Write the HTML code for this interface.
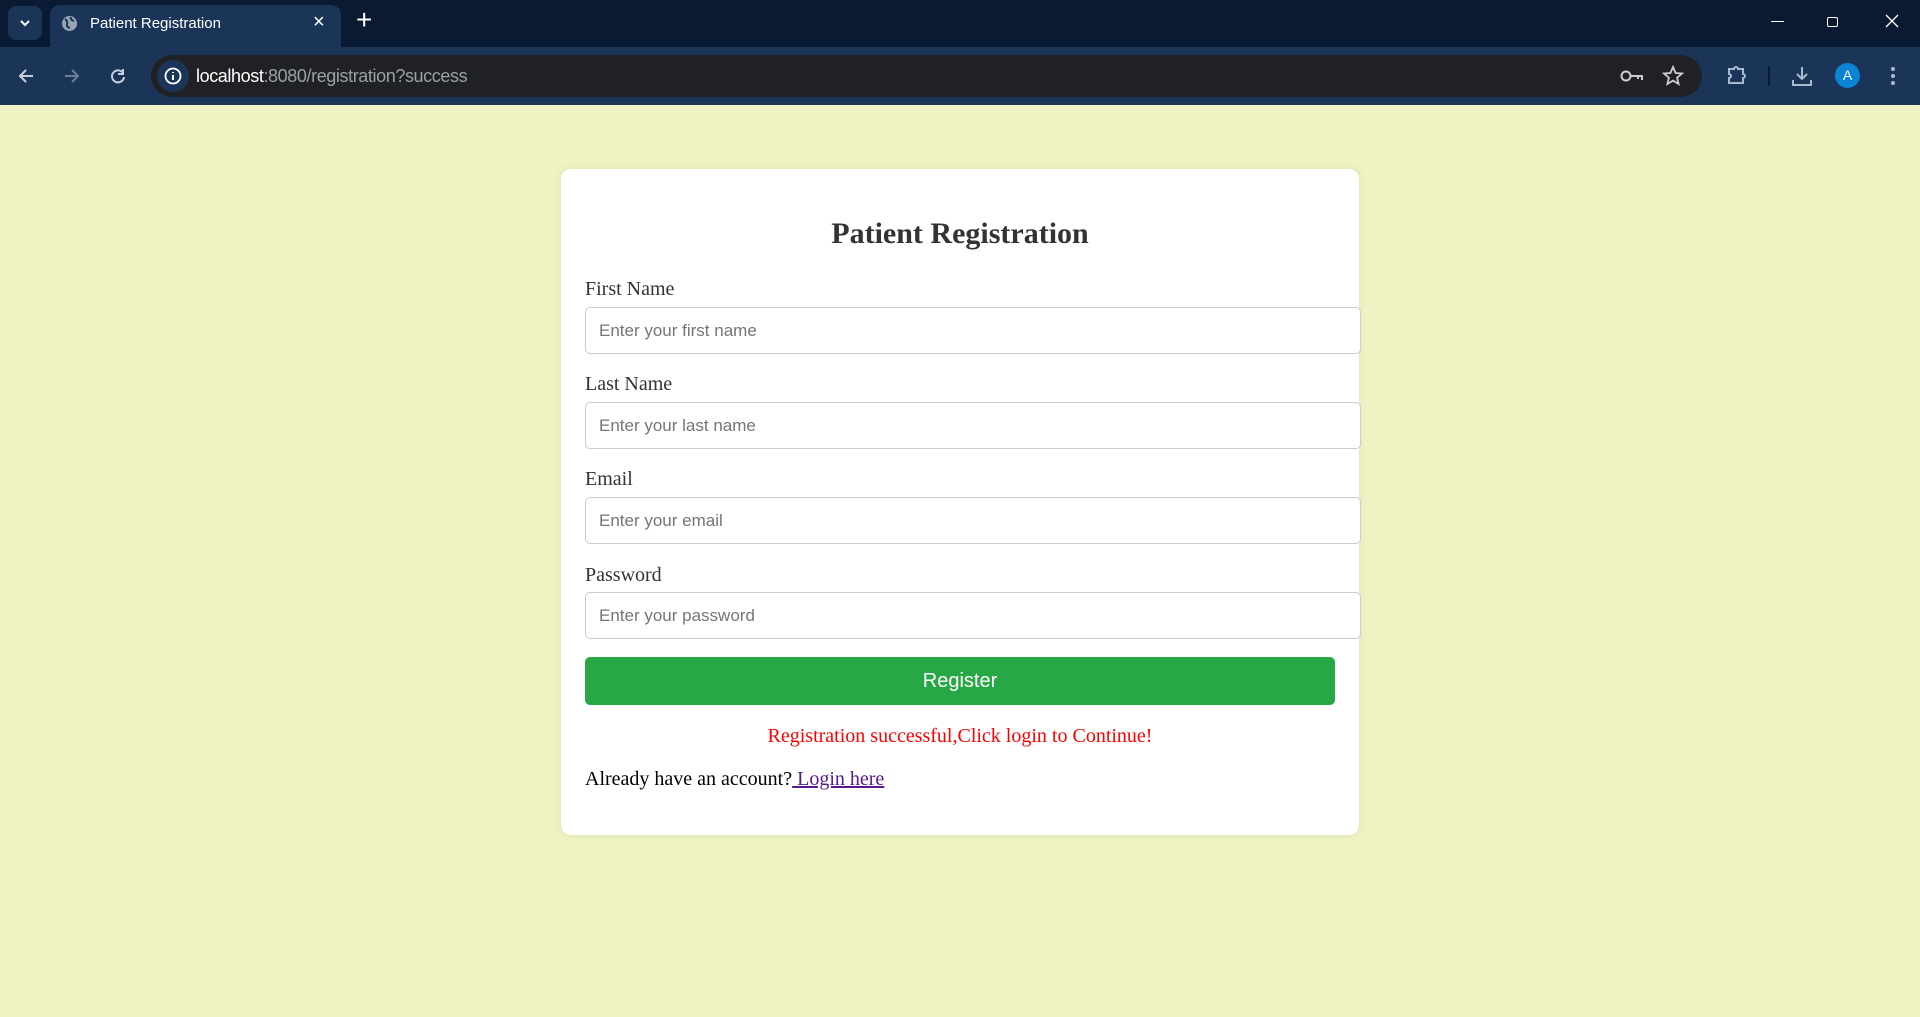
<!DOCTYPE html>
<html><head><meta charset="utf-8"><style>
*{box-sizing:border-box;margin:0;padding:0}
body{width:1920px;height:1017px;background:#eff2c3;position:relative;overflow:hidden;font-family:"Liberation Serif",serif}
.top{position:absolute;left:0;top:0;width:1920px;height:47px;background:#0b1a33}
.tb{position:absolute;left:0;top:47px;width:1920px;height:58px;background:#1b3558}
.tab{position:absolute;left:50px;top:5px;width:291px;height:42px;background:#1b3558;border-radius:10px 10px 0 0;color:#fff;font:15px "Liberation Sans",sans-serif}
.addr{position:absolute;left:151px;top:55px;width:1551px;height:42px;background:#202124;border-radius:21px}
.w{color:#fff}
.abs{position:absolute}
.card{position:absolute;left:561px;top:169px;width:798px;height:666px;background:#fff;border-radius:10px;box-shadow:0 0 8px rgba(0,0,0,.08)}
h2{position:absolute;left:0;width:100%;text-align:center;top:216px;font-size:30px;font-weight:bold;color:#333;line-height:36px}
.lbl{position:absolute;left:585px;font-size:20px;color:#333;line-height:24px}
.in{position:absolute;left:585px;width:776px;height:47px;border:1px solid #ccc;border-radius:5px;background:#fff;font:17px "Liberation Sans",sans-serif;color:#757575;padding:0 13px;line-height:45px}
</style></head><body>
<div class="top"></div>
<div class="abs" style="left:8px;top:6px;width:34px;height:34px;background:#1b3558;border-radius:8px"></div>
<svg class="abs" style="left:18px;top:16px" width="14" height="14"><path d="M3 5l4 4 4-4" stroke="#fff" stroke-width="2" fill="none"/></svg>
<div class="tab">
<svg class="abs" style="left:11px;top:10px" width="17" height="17"><circle cx="8.5" cy="8.5" r="7.5" fill="#9aa4b4"/><path d="M4 4q3 2 2 5t3 4M10 2q-1 3 3 4" stroke="#1b3558" stroke-width="2" fill="none"/></svg>
<span class="abs" style="left:40px;top:10px">Patient Registration</span>
<span class="abs" style="left:263px;top:6px;font-size:20px">×</span>
</div>
<span class="abs" style="left:356px;top:4px;color:#fff;font:28px 'Liberation Sans',sans-serif">+</span>
<div class="abs" style="left:1771px;top:21px;width:13px;height:1px;background:#fff"></div>
<div class="abs" style="left:1827px;top:17px;width:11px;height:10px;border:1px solid #fff;border-radius:2px"></div>
<svg class="abs" style="left:1885px;top:14px" width="14" height="14"><path d="M1 1l12 12M13 1L1 13" stroke="#fff" stroke-width="1.3"/></svg>
<div class="tb"></div>
<svg class="abs" style="left:16px;top:66px" width="20" height="20"><path d="M17 10H4M10 4l-6 6 6 6" stroke="#c7cfdc" stroke-width="2" fill="none"/></svg>
<svg class="abs" style="left:62px;top:66px" width="20" height="20"><path d="M3 10h13M10 4l6 6-6 6" stroke="#6d7d95" stroke-width="2" fill="none"/></svg>
<svg class="abs" style="left:108px;top:66px" width="20" height="20"><path d="M15 7A6 6 0 1 0 16 11M15 3v5h-5" stroke="#c7cfdc" stroke-width="2" fill="none"/></svg>
<div class="addr"></div>
<div class="abs" style="left:157px;top:60px;width:32px;height:32px;border-radius:50%;background:#1b3558"></div>
<svg class="abs" style="left:164px;top:67px" width="18" height="18"><circle cx="9" cy="9" r="7.5" stroke="#fff" stroke-width="1.8" fill="none"/><path d="M9 8v5M9 5v1" stroke="#fff" stroke-width="2"/></svg>
<span class="abs" style="left:196px;top:66px;font:18px 'Liberation Sans',sans-serif;color:#9aa0a6;letter-spacing:-0.4px"><span class="w">localhost</span>:8080/registration?success</span>
<svg class="abs" style="left:1620px;top:66px" width="24" height="20"><circle cx="6" cy="10" r="4.5" stroke="#ccc" stroke-width="2" fill="none"/><path d="M10.5 10H22v4M18 10v3" stroke="#ccc" stroke-width="2" fill="none"/></svg>
<svg class="abs" style="left:1662px;top:65px" width="22" height="22"><path d="M11 2l2.6 6 6.4.5-4.9 4.2 1.5 6.3L11 15.6 5.4 19l1.5-6.3L2 8.5 8.4 8z" stroke="#ccc" stroke-width="1.8" fill="none"/></svg>
<svg class="abs" style="left:1725px;top:64px" width="22" height="22"><path d="M4 5h5a2 2 0 0 1 4 0h5v5a2 2 0 0 1 0 4v5H4v-5a2 2 0 0 0 0-4z" stroke="#aab8d0" stroke-width="2" fill="none"/></svg>
<div class="abs" style="left:1768px;top:66px;width:2px;height:20px;background:#0b1a33"></div>
<svg class="abs" style="left:1790px;top:64px" width="24" height="24"><path d="M12 3v12M7 10l5 5 5-5M3 16v5h18v-5" stroke="#aab8d0" stroke-width="2" fill="none"/></svg>
<div class="abs" style="left:1835px;top:63px;width:25px;height:25px;border-radius:50%;background:#0b84d6;color:#fff;font:14px 'Liberation Sans',sans-serif;text-align:center;line-height:25px">A</div>
<div class="abs" style="left:1891px;top:67px;width:4px;height:4px;border-radius:50%;background:#aab8d0;box-shadow:0 7px 0 #aab8d0,0 14px 0 #aab8d0"></div>

<div class="card"></div>
<h2>Patient Registration</h2>
<div class="lbl" style="top:277px">First Name</div>
<div class="in" style="top:307px">Enter your first name</div>
<div class="lbl" style="top:372px">Last Name</div>
<div class="in" style="top:402px">Enter your last name</div>
<div class="lbl" style="top:467px">Email</div>
<div class="in" style="top:497px">Enter your email</div>
<div class="lbl" style="top:563px">Password</div>
<div class="in" style="top:592px">Enter your password</div>
<div class="abs" style="left:585px;top:657px;width:750px;height:48px;background:#28a745;border-radius:5px;color:#fff;font:20px 'Liberation Sans',sans-serif;text-align:center;line-height:48px">Register</div>
<div class="abs" style="left:561px;width:798px;top:724px;text-align:center;color:#f00;font-size:20px;line-height:24px">Registration successful,Click login to Continue!</div>
<div class="abs" style="left:585px;top:767px;font-size:20px;line-height:24px;color:#000">Already have an account?<a style="color:#551a8b;text-decoration:underline"> Login here</a></div>
</body></html>
